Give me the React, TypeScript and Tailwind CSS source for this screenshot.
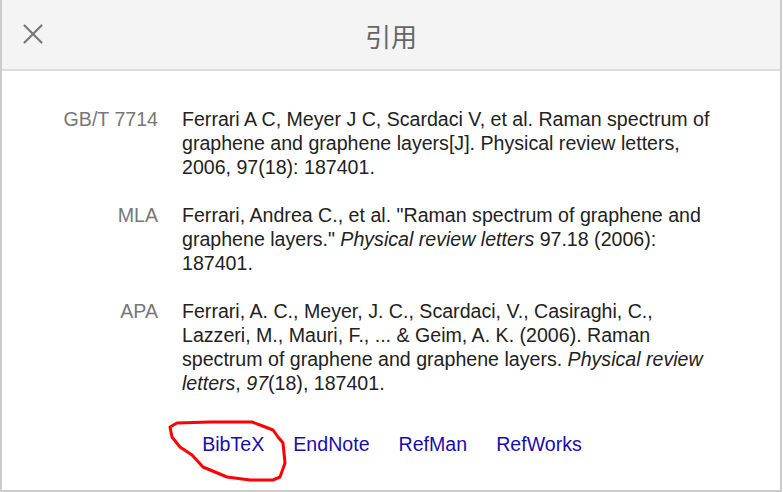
import { X } from 'lucide-react';

const citations = [
  {
    label: 'GB/T 7714',
    text: (
      <>Ferrari A C, Meyer J C, Scardaci V, et al. Raman spectrum of graphene and graphene layers[J]. Physical review letters, 2006, 97(18): 187401.</>
    ),
  },
  {
    label: 'MLA',
    text: (
      <>
        Ferrari, Andrea C., et al. "Raman spectrum of graphene and graphene layers." <i>Physical review letters</i> 97.18 (2006): 187401.
      </>
    ),
  },
  {
    label: 'APA',
    text: (
      <>
        Ferrari, A. C., Meyer, J. C., Scardaci, V., Casiraghi, C., Lazzeri, M., Mauri, F., ... &amp; Geim, A. K. (2006). Raman spectrum of graphene and graphene layers. <i>Physical review letters</i>, <i>97</i>(18), 187401.
      </>
    ),
  },
];

const links = ['BibTeX', 'EndNote', 'RefMan', 'RefWorks'];

export default function App() {
  return (
    <div className="relative w-[783px] h-[492px] bg-white" style={{ fontFamily: '"Liberation Sans", Arial, sans-serif' }}>
      <div className="w-[782px] h-[492px] border-x-2 border-b-2 border-[#cccccc] flex flex-col">
        <div className="h-[71px] shrink-0 bg-[#f4f4f4] border-b-2 border-[#dddddd] flex items-center relative">
          <button className="absolute left-[14px] top-[17px] p-0 text-[#777777]">
            <X className="w-[34px] h-[34px]" strokeWidth={1.5} />
          </button>
          <div className="flex-1 text-center text-[26px] text-[#666666] pt-[2px]" style={{ fontFamily: '"Noto Sans CJK SC", sans-serif' }}>
            引用
          </div>
        </div>

        <div className="pt-[36px] flex flex-col gap-[24px]">
          {citations.map(c => (
            <div key={c.label} className="flex gap-[24px] text-[19.6px] leading-[24px]">
              <div className="w-[156px] shrink-0 text-right text-[#777777]">{c.label}</div>
              <div className="w-[540px] text-[#222222]">{c.text}</div>
            </div>
          ))}
        </div>

        <div className="mt-[37px] flex justify-center gap-[29px] text-[19.6px] leading-[24px] pl-[2px]">
          {links.map(l => (
            <a key={l} href="#" className="text-[#1a0dab]">{l}</a>
          ))}
        </div>
      </div>

      <svg className="absolute left-0 top-0 pointer-events-none" width="783" height="492">
        <path
          d="M170 427 L177 423 L210 422 L252 422 L260 425 L273 430 L278 437 L283 443 L285 463 L280 477 L273 480 L250 480 L227 477 L203 467 L192 455 L180 447 L172 437 Z"
          fill="none"
          stroke="#ff0000"
          strokeWidth="3"
          strokeLinejoin="round"
        />
      </svg>
    </div>
  );
}
